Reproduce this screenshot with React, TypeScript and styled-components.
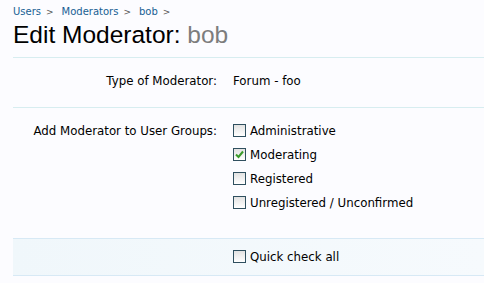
import styled, { createGlobalStyle } from "styled-components";

const Global = createGlobalStyle`
  body {
    margin: 0;
    background: #fcfcff;
    font-family: "DejaVu Sans", Verdana, sans-serif;
    font-size: 11.8px;
    color: #000;
  }
`;

const Page = styled.div`
  padding: 0 0 0 13px;
  width: 471px;
  overflow: hidden;
`;

const Crumbs = styled.div`
  display: flex;
  gap: 8px;
  padding-top: 5px;
  height: 14px;
  line-height: 14px;
  font-size: 10px;
`;

const Crumb = styled.a`
  color: #176093;
  text-decoration: none;
  &::after {
    content: ">";
    color: #555;
    font-size: 9px;
    margin-left: 5px;
  }
`;

const Title = styled.h1`
  margin: 0;
  padding: 2px 0 8px;
  font-family: "Liberation Sans", Arial, sans-serif;
  font-weight: normal;
  font-size: 24.5px;
  line-height: 28px;
  color: #000;
  border-bottom: 1px solid #d7edf0;
  span {
    color: #7d7d7d;
  }
`;

const Row = styled.div<{ $last?: boolean }>`
  display: grid;
  grid-template-columns: 220px 1fr;
  padding: ${(p) => (p.$last ? "15px 0 27px" : "15px 0 18px")};
  border-bottom: ${(p) => (p.$last ? "none" : "1px solid #d7edf0")};
`;

const Label = styled.div`
  text-align: right;
  padding-right: 16px;
  line-height: 16px;
`;

const Value = styled.div`
  line-height: 16px;
`;

const Choices = styled.ul`
  list-style: none;
  margin: 0;
  padding: 0;
  display: flex;
  flex-direction: column;
  gap: 8px;
`;

const Choice = styled.li`
  display: flex;
  align-items: center;
  gap: 4px;
  line-height: 16px;
`;

const Box = styled.span`
  width: 11px;
  height: 11px;
  border: 1px solid #2f4f5f;
  background: linear-gradient(#e2e2e2, #fff);
  display: inline-flex;
  align-items: center;
  justify-content: center;
  margin-top: -2px;
`;

const Submit = styled.div`
  display: grid;
  grid-template-columns: 220px 1fr;
  padding: 10px 0;
  background: linear-gradient(90deg, #f0f7fb, #f6fafd);
  border-top: 1px solid #d7e9f5;
  border-bottom: 1px solid #d7e9f5;
`;

const Check = ({ on }: { on?: boolean }) => (
  <Box>
    {on && (
      <svg width="9" height="9" viewBox="0 0 9 9">
        <path d="M1 4.5 L3.5 7 L8 1.5" fill="none" stroke="#3a9a2a" strokeWidth="2" />
      </svg>
    )}
  </Box>
);

const groups = [
  { name: "Administrative", on: false },
  { name: "Moderating", on: true },
  { name: "Registered", on: false },
  { name: "Unregistered / Unconfirmed", on: false },
];

export default function App() {
  return (
    <>
      <Global />
      <Page>
        <Crumbs>
          <Crumb href="#">Users</Crumb>
          <Crumb href="#">Moderators</Crumb>
          <Crumb href="#">bob</Crumb>
        </Crumbs>
        <Title>
          Edit Moderator: <span>bob</span>
        </Title>
        <Row>
          <Label>Type of Moderator:</Label>
          <Value>Forum - foo</Value>
        </Row>
        <Row $last>
          <Label>Add Moderator to User Groups:</Label>
          <Choices>
            {groups.map((g) => (
              <Choice key={g.name}>
                <Check on={g.on} />
                {g.name}
              </Choice>
            ))}
          </Choices>
        </Row>
        <Submit>
          <div />
          <Choice>
            <Check />
            Quick check all
          </Choice>
        </Submit>
      </Page>
    </>
  );
}
